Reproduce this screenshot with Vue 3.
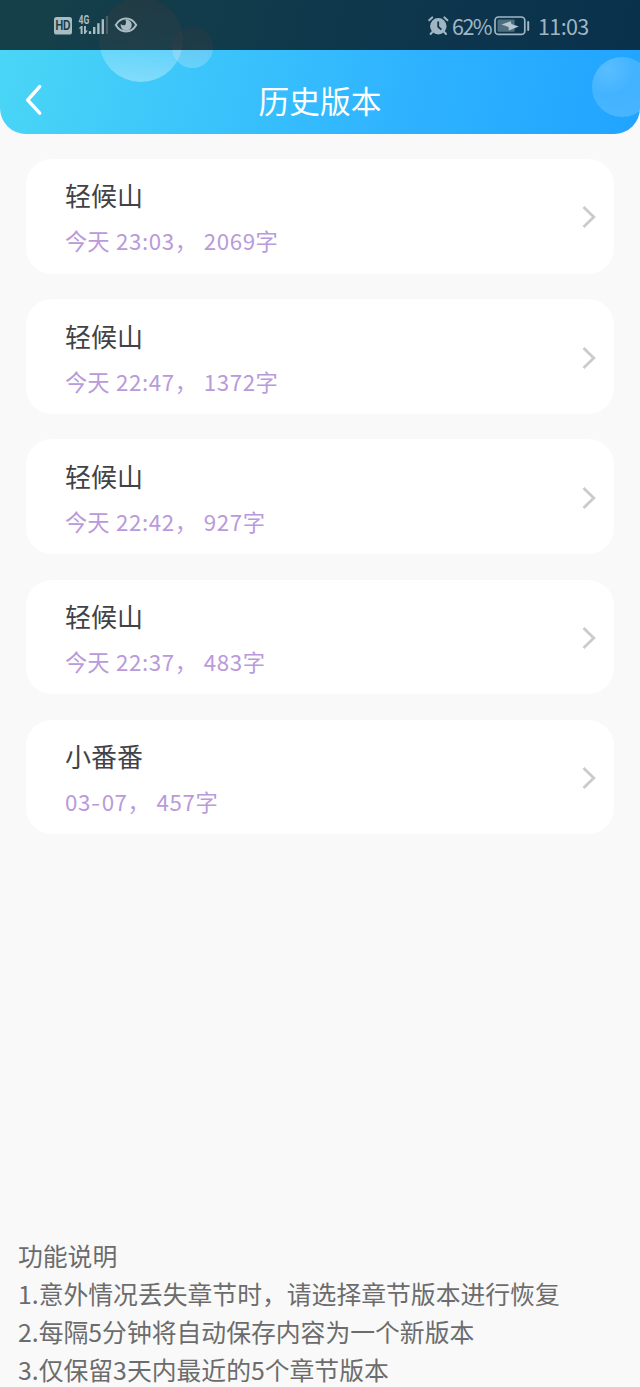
<script setup>
const versions = [
  { title: '轻候山', day: '今天', time: '23:03', count: '2069' },
  { title: '轻候山', day: '今天', time: '22:47', count: '1372' },
  { title: '轻候山', day: '今天', time: '22:42', count: '927' },
  { title: '轻候山', day: '今天', time: '22:37', count: '483' },
  { title: '小番番', day: '', time: '03-07', count: '457' },
].map((item) => ({ ...item, timeParts: item.time.split(/(-)/) }))
const notes = [
  '功能说明',
  '1.意外情况丢失章节时，请选择章节版本进行恢复',
  '2.每隔5分钟将自动保存内容为一个新版本',
  '3.仅保留3天内最近的5个章节版本',
]
</script>

<template>
  <div class="screen">
    <header class="header">
      <div class="bubble large"></div>
      <div class="bubble small"></div>
      <div class="bubble right"></div>
      <div class="status">
        <svg class="signals" width="88" height="24" viewBox="0 0 88 24">
          <rect x="0" y="4" width="18" height="17.6" rx="2.6" fill="#a9bcc3" />
          <text x="1.4" y="17.2" class="hd" textLength="15.2" lengthAdjust="spacingAndGlyphs">HD</text>
          <text x="24.5" y="11" class="net" textLength="10.8" lengthAdjust="spacingAndGlyphs">4G</text>
          <g fill="#a9bcc3">
            <path d="M24.5 15.6 27.2 13H28.6V21h-2v-5.4zM30 13h1.9V17.6h1.9l-2.6 3.4H30z" />
            <rect x="34.8" y="18.2" width="2.4" height="2.8" />
            <rect x="39" y="14" width="2.4" height="7" />
            <rect x="43.2" y="10.2" width="2.4" height="10.8" />
            <rect x="47.6" y="6.2" width="2.4" height="14.8" />
            <rect x="52" y="3" width="2" height="18" opacity=".27" />
          </g>
          <path d="M61.8 12C66.8 3.4 77.2 3.4 82.2 12C77.2 20.6 66.8 20.6 61.8 12Z" fill="none" stroke="#a9bcc3" stroke-width="2" />
          <path d="M71.2 6.6A5.6 5.6 0 1 1 66.7 11Q69.6 13.4 71.5 11.5Q73 9.4 71.2 6.6Z" fill="#a9bcc3" />
        </svg>
        <div class="status-right">
          <svg width="21" height="20" viewBox="0 0 21 20">
            <circle cx="10.3" cy="10.2" r="8.2" fill="#a0b6c3" />
            <path d="M1.2 4.2 4.2 1.4M16.4 1.4 19.4 4.2M4.8 15.5 2.6 18M15.8 15.5 18 18" stroke="#a0b6c3" stroke-width="2" stroke-linecap="round" />
            <path d="M10.2 5.5V10.8l3.2 2.8" fill="none" stroke="#0d374d" stroke-width="1.8" />
          </svg>
          <span class="percent">62%</span>
          <svg class="battery" width="36" height="20" viewBox="0 0 36 20">
            <rect x="1" y="1" width="29.8" height="17.4" rx="3.5" fill="none" stroke="#a0b6c3" stroke-width="1.7" />
            <rect x="3.6" y="3.6" width="17" height="12.2" rx="1" fill="#4f6e7f" />
            <path d="M7.5 8.4 16.8 5.2 17.4 8 24.8 10.5 14.8 14.6 14.6 10.9Z" fill="#b6c7d0" />
            <path d="M34.2 6v8" stroke="#a0b6c3" stroke-width="2" stroke-linecap="round" />
          </svg>
          <span class="clock">11:03</span>
        </div>
      </div>
      <div class="nav">
        <svg class="back" width="20" height="34" viewBox="0 0 20 34">
          <path d="M16.7 3.6 4.7 17 16.7 30.2" fill="none" stroke="#fff" stroke-width="3.4" stroke-linecap="round" stroke-linejoin="round" />
        </svg>
        <h1>历史版本</h1>
      </div>
    </header>

    <main class="list">
      <article v-for="(item, index) in versions" :key="index" class="card">
        <div>
          <h2>{{ item.title }}</h2>
          <p class="meta">
            <span v-if="item.day" class="day">{{ item.day }}</span>
            <span class="time"><span v-for="(part, k) in item.timeParts" :key="k" :class="{ dash: part === '-' }">{{ part }}</span></span>
            <span class="comma">，</span>
            <span class="count">{{ item.count }}</span>
            <span>字</span>
          </p>
        </div>
        <svg width="16" height="24" viewBox="0 0 16 24">
          <path d="M2.5 2 12.8 12 2.5 22" fill="none" stroke="#cbcbcb" stroke-width="2.8" />
        </svg>
      </article>
    </main>

    <footer class="notes">
      <p v-for="(line, index) in notes" :key="index">{{ line }}</p>
    </footer>
  </div>
</template>

<style>
body {
  margin: 0;
  background: #f9f9f9;
}
</style>

<style scoped>
.screen {
  display: flex;
  flex-direction: column;
  width: 640px;
  height: 1387px;
  overflow: hidden;
  background: #f9f9f9;
  font-family: "Noto Sans CJK SC", sans-serif;
}
h1, h2, p {
  margin: 0;
  font-weight: 400;
}
.header {
  position: relative;
  height: 134px;
  flex: none;
  overflow: hidden;
  border-radius: 0 0 26px 26px;
  background: linear-gradient(105deg, #4bd7f5 0%, #3cc5fb 32%, #2eb2ff 65%, #20a4ff 100%);
}
.bubble {
  position: absolute;
  border-radius: 50%;
}
.large {
  left: 99px;
  top: -2px;
  width: 84px;
  height: 84px;
  background: linear-gradient(#ffb0a040 0%, #ffffff30 60%, #ffffff58 100%);
}
.small {
  left: 172px;
  top: 27px;
  width: 41px;
  height: 41px;
  background: linear-gradient(#ffb0a030, #ffffff38);
}
.right {
  left: 592px;
  top: 57px;
  width: 60px;
  height: 60px;
  background: radial-gradient(circle at 28% 20%, #ffffff40 0%, #ffffff26 40%, #ffffff30 100%);
}
.status {
  position: relative;
  display: flex;
  justify-content: space-between;
  box-sizing: border-box;
  height: 50px;
  padding: 13px 51px 0 54px;
  background: rgba(0, 0, 0, 0.7);
}
.hd {
  font: 700 12.5px Inter, sans-serif;
  fill: #173d49;
}
.net {
  font: 700 12px Roboto, sans-serif;
  fill: #a9bcc3;
}
.status-right {
  display: flex;
  height: 26px;
  align-items: center;
  font-size: 21.5px;
  line-height: 26px;
  color: #a0b6c3;
}
.percent {
  margin-left: 3px;
  width: 41.5px;
  letter-spacing: -1.5px;
}
.percent, .clock {
  margin-top: -1px;
}
.clock {
  width: 51px;
  margin-left: 8.5px;
  letter-spacing: -0.6px;
}
.nav {
  position: relative;
  display: grid;
  grid-template-columns: 60px 1fr 60px;
  align-items: center;
  box-sizing: border-box;
  height: 84px;
  padding-top: 16px;
}
.back {
  margin-left: 23px;
}
h1 {
  text-align: center;
  color: #fff;
  font-size: 30.7px;
  line-height: 40px;
}
.list {
  display: flex;
  flex-direction: column;
  gap: 25.7px;
  padding: 25px 26px 0;
}
.card {
  display: flex;
  justify-content: space-between;
  align-items: center;
  box-sizing: border-box;
  height: 114.5px;
  padding: 1.2px 17px 0 39px;
  border-radius: 26px;
  background: #fff;
}
.card > svg {
  margin-top: 1px;
}
h2 {
  font-size: 26px;
  line-height: 38px;
  color: #424246;
}
.meta {
  display: flex;
  margin-top: 9px;
  font-size: 22.3px;
  line-height: 34px;
  color: #b99adb;
}
.day {
  width: 51px;
}
.time, .count {
  letter-spacing: 0.6px;
}
.dash {
  display: inline-block;
  width: 8.3px;
  margin-right: 2.4px;
  transform: scaleX(1.2);
  transform-origin: left;
}
.comma {
  width: 29px;
}
.notes {
  margin-top: auto;
  padding: 0 18px;
  height: 151.5px;
  font-size: 24.82px;
  line-height: 38px;
  color: #6c6c6c;
  white-space: nowrap;
}
</style>
